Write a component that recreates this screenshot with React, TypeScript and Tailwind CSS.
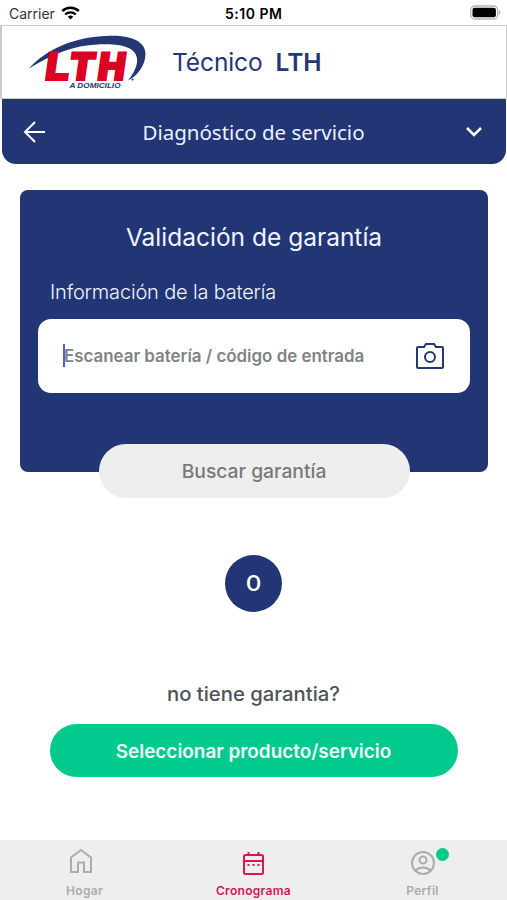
import { FC, ReactNode } from "react";

const Logo: FC = () => (
  <svg width="122" height="58" viewBox="28 33 122 58" className="shrink-0">
    <path
      d="M29 68.6C41 55 66 37 109 35.8C132 35 145.5 42 145.5 54C145.5 66 136 77 128 80.5C134 73 138 65 137 58C135 47 121 43.500 101 44.300C73 45 53 54 29 68.600Z"
      fill="#243674"
    />
    <text
      transform="translate(46.500 78.700) skewX(3)"
      textLength="79"
      lengthAdjust="spacing"
      fill="#dc0024"
      stroke="#dc0024"
      strokeWidth="4"
      className="font-['Liberation_Sans'] text-[37px] font-bold italic"
    >
      LTH
    </text>
    <text
      x="69.500"
      y="88.300"
      textLength="51"
      lengthAdjust="spacingAndGlyphs"
      fill="#243674"
      className="font-['Liberation_Sans'] text-[8px] font-bold italic"
    >
      A DOMICILIO
    </text>
    <circle cx="132.500" cy="79.500" r="1" fill="#243674" />
  </svg>
);

const StatusBar: FC = () => (
  <div className="relative flex h-[25px] items-center justify-between pt-[2px] pl-[9px] pr-[6px] text-black">
    <div className="flex items-center gap-[6px]">
      <span className="text-[14px] text-[#333]">Carrier</span>
      <svg width="19" height="14" viewBox="0 0 19 14" fill="none" stroke="#000" className="-mt-[2px]">
        <path d="M1.200 5.100a12 12 0 0 1 16.600 0" strokeWidth="2.500" />
        <path d="M4.200 8.500a7.700 7.700 0 0 1 10.600 0" strokeWidth="2.300" />
        <path d="M6.800 10.700a4 4 0 0 1 5.400 0L9.500 13.500Z" fill="#000" stroke="none" />
      </svg>
    </div>
    <span className="absolute left-[225px] text-[14px] font-semibold tracking-[0.500px] whitespace-nowrap">
      5:10 PM
    </span>
    <svg width="31" height="15" viewBox="0 0 31 15" className="-mt-[2px]">
      <rect x="0.700" y="1" width="27" height="13" rx="4" fill="#fff" stroke="#b5b5b5" strokeWidth="1.300" />
      <rect x="2.500" y="2.800" width="23.400" height="9.400" rx="2" fill="#000" />
      <path d="M29 5.300c2 .7 2 3.700 0 4.400Z" fill="#b5b5b5" />
    </svg>
  </div>
);

interface TabProps {
  label: string;
  active?: boolean;
  children: ReactNode;
}

const Tab: FC<TabProps> = ({ label, active, children }) => (
  <div
    className={`flex w-[169px] flex-col items-center ${
      active ? "text-[#d91555]" : "text-[#acacac]"
    }`}
  >
    <div className="flex h-[42px] items-center pt-[3px]">{children}</div>
    <span className="text-[12px] leading-[18px] font-semibold tracking-[0.3px]">
      {label}
    </span>
  </div>
);

const App: FC = () => {
  return (
    <div className="flex h-[900px] w-[507px] flex-col overflow-hidden bg-white font-[Inter,sans-serif]">
      <StatusBar />

      <header className="flex h-[74px] items-center border border-l-2 border-[#cbcbce] pl-[26px]">
        <Logo />
        <h1 className="ml-[22px] flex gap-[13px] pt-px text-[24.500px] text-[#243674]">
          <span className="tracking-[-0.100px]">Técnico</span>
          <span className="font-semibold">LTH</span>
        </h1>
      </header>

      <div className="mr-px ml-[2px] flex h-[65px] items-center justify-between rounded-b-[14px] bg-[#223574] pr-[24px] pl-[21px] text-white">
        <svg width="23" height="22" viewBox="0 0 23 22" fill="none" stroke="currentColor" strokeWidth="2">
          <path d="M22 11H2M12 1 2 11l10 10" />
        </svg>
        <h2 className="pt-px pr-[5px] font-['Noto_Sans',sans-serif] text-[20.500px] text-[#edf2ff]">
          Diagnóstico de servicio
        </h2>
        <svg width="16" height="10" viewBox="0 0 16 10" fill="none" stroke="currentColor" strokeWidth="2.500">
          <path d="m1 1 7 7 7-7" />
        </svg>
      </div>

      <main className="flex flex-1 flex-col items-center">
        <section className="mt-[26px] mr-px ml-[2px] flex h-[282px] w-[468px] flex-col rounded-[8px] bg-[#223574] px-[18px] text-[#f0f4ff]">
          <h3 className="mt-[30px] text-center text-[24.500px] leading-[34px]">
            Validación de garantía
          </h3>
          <p className="mt-[24px] ml-[12px] text-[20px] leading-[28px] font-light tracking-[-0.170px]">
            Información de la batería
          </p>
          <div className="mt-[13px] flex h-[74px] shrink-0 items-center justify-between rounded-[13px] bg-white pr-[26px] pl-[25px]">
            <div className="flex items-center">
              <span className="h-[23px] w-[2px] bg-[#4664dc]" />
              <span className="-ml-px pt-px text-[16.900px] font-semibold whitespace-nowrap text-[#808285]">
                Escanear batería / código de entrada
              </span>
            </div>
            <svg width="28" height="26" viewBox="0 0 28 26" fill="none" stroke="#243674" strokeWidth="2">
              <path d="M2 4h6l2-3h8l2 3h6q1 0 1 1v19q0 1-1 1H2q-1 0-1-1V5q0-1 1-1Z" />
              <circle cx="14" cy="14" r="5" />
            </svg>
          </div>
          <button className="mt-[51px] h-[54px] w-[311px] shrink-0 self-center rounded-full bg-[#eee] pt-px text-[19.300px] font-medium text-[#77797c]">
            Buscar garantía
          </button>
        </section>

        <div className="mt-[83px] flex size-[57px] items-center justify-center rounded-full bg-[#223574] font-[Roboto,sans-serif] text-[22px] font-medium text-white">
          O
        </div>
        <p className="mt-[67px] text-[20.300px] leading-[30px] font-medium text-[#505258]">
          no tiene garantia?
        </p>
        <button className="mt-[15px] h-[53px] w-[408px] rounded-full bg-[#02ca8e] pt-[3px] text-[18.900px] font-semibold text-[#f0fffa]">
          Seleccionar producto/servicio
        </button>
      </main>

      <nav className="flex h-[60px] shrink-0 bg-[#eee]">
        <Tab label="Hogar">
          <svg width="22" height="24" viewBox="0 0 22 24" fill="none" stroke="currentColor" strokeWidth="2" className="mr-[8px] mb-[3px]">
            <path d="M1 8.500 11 1l10 7.500V23h-7v-9.500H8V23H1Z" />
          </svg>
        </Tab>
        <Tab label="Cronograma" active>
          <svg width="21" height="24" viewBox="0 0 21 24" fill="none" stroke="currentColor" strokeWidth="2">
            <rect x="1" y="4" width="19" height="19" rx="1.500" />
            <path d="M1 10h19M5.500 1v4M15.500 1v4" />
            <path d="M4.500 14h2M9.500 14h2M14.500 14h2" strokeWidth="2.200" />
          </svg>
        </Tab>
        <Tab label="Perfil">
          <div className="relative">
            <svg width="24" height="24" viewBox="0 0 24 24" fill="none" stroke="currentColor" strokeWidth="2">
              <circle cx="12" cy="12" r="11" />
              <circle cx="12" cy="9" r="3.500" />
              <path d="M4.500 19.500c4-4 11-4 15 0" />
            </svg>
            <span className="absolute -top-[3px] left-[25px] size-[13px] rounded-full bg-[#05ca8e]" />
          </div>
        </Tab>
      </nav>
    </div>
  );
};

export default App;
